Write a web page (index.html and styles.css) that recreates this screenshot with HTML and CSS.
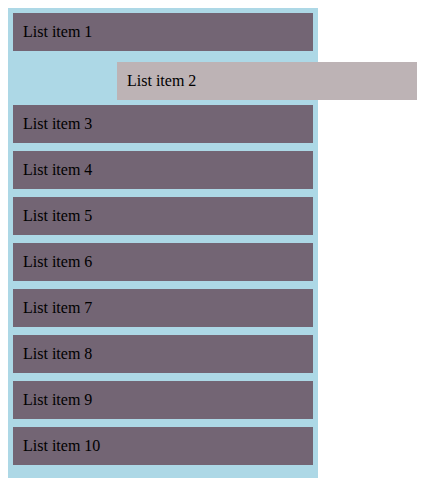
FILE: index.html
```html
<!DOCTYPE html>
<html>
<head>
<meta charset="utf-8">
<link rel="stylesheet" href="styles.css">
</head>
<body>
<ul class="list">
  <li class="item">List item 1</li>
  <li class="item item-dragging">List item 2</li>
  <li class="item">List item 3</li>
  <li class="item">List item 4</li>
  <li class="item">List item 5</li>
  <li class="item">List item 6</li>
  <li class="item">List item 7</li>
  <li class="item">List item 8</li>
  <li class="item">List item 9</li>
  <li class="item">List item 10</li>
</ul>
</body>
</html>
```
FILE: styles.css
```css
body {
  margin: 8px;
  font-family: "Liberation Serif", "Times New Roman", serif;
  font-size: 16px;
  background: #fff;
}
.list {
  list-style: none;
  margin: 0;
  padding: 5px 5px 5px 5px;
  width: 300px;
  background: #add8e6;
}
.item {
  box-sizing: border-box;
  height: 38px;
  line-height: 18px;
  padding: 10px 10px;
  margin-bottom: 8px;
  background: #736574;
  color: #000;
}
.item-dragging {
  position: relative;
  left: 104px;
  top: 3px;
  background: #bdb3b5;
}
```
